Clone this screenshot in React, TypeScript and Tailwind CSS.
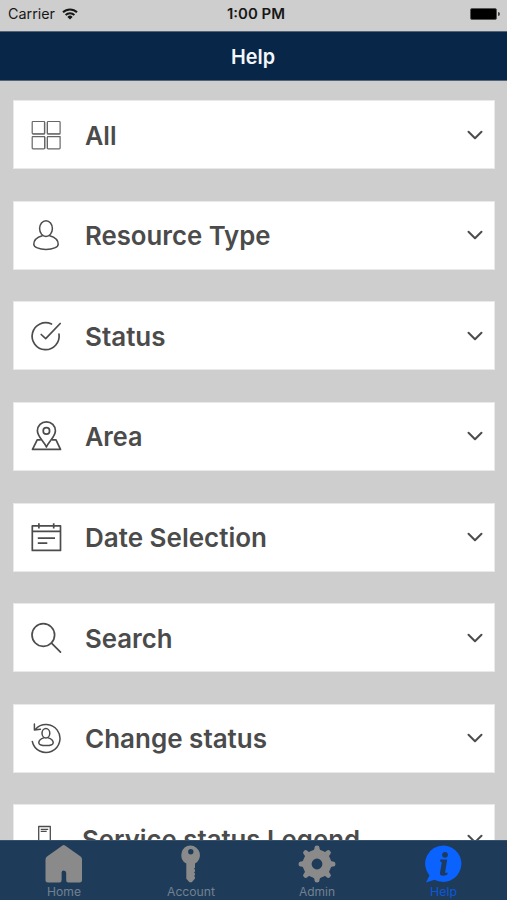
import type { ReactNode } from "react";

const line = {
  fill: "none",
  stroke: "#4c4c4c",
  strokeWidth: 1.7,
  strokeLinecap: "round" as const,
  strokeLinejoin: "round" as const,
};

function Icon({ children }: { children: ReactNode }) {
  return (
    <svg viewBox="0 0 32 32" className="h-8 w-8 shrink-0" {...line}>
      {children}
    </svg>
  );
}

const items: { label: string; width: number; inset?: boolean; icon: ReactNode }[] = [
  {
    label: "All",
    width: 31.5,
    icon: (
      <g strokeWidth={1.2} stroke="#666">
        <rect x="2.2" y="2.5" width="12.5" height="12.3" rx="0.8" />
        <rect x="17.4" y="2.5" width="12.7" height="12.3" rx="0.8" />
        <rect x="2.2" y="17.5" width="12.5" height="12.3" rx="0.8" />
        <rect x="17.4" y="17.5" width="12.7" height="12.3" rx="0.8" />
        <path d="M3 15h11.5V3.5M18 15h12M14.7 18v11.5M17.4 3.5V15M17.4 18v11.5M3 17.6h11.5M18 17.6h12" />
      </g>
    ),
  },
  {
    label: "Resource Type",
    width: 185.5,
    icon: (
      <g strokeWidth={1.5}>
        <ellipse cx="16" cy="9.6" rx="6.4" ry="7.8" />
        <path d="M12.3 16.8C7.500 18.200 3.800 21 3.800 25.200c0 3 5.300 5.200 12.200 5.200s12.200-2.200 12.200-5.200c0-4.200-3.700-7-8.500-8.400" />
      </g>
    ),
  },
  {
    label: "Status",
    width: 80.5,
    icon: <path d="M21.500 4A13.500 13.500 0 1 0 29 14.200M11.200 14.500l4.500 4.200L30.200 3.500" />,
  },
  {
    label: "Area",
    width: 57.5,
    icon: (
      <g>
        <path d="M16.400 27C14 21.500 7.400 16.800 7.400 10.800a9 9 0 0 1 18 0c0 6-6.600 10.700-9 16.200Z" />
        <circle cx="16.400" cy="10.900" r="3.200" />
        <path d="M10.200 19.800H7.200L2.500 29.400h28L26 19.800h-3.400" />
      </g>
    ),
  },
  {
    label: "Date Selection",
    width: 182,
    icon: (
      <path strokeLinecap="butt" d="M2.300 4.800h28.200v24.600H2.300ZM2.300 10.300h28.200M8.900 2.200v5.400M23.700 2.200v5.400M7.800 17.200h17.200M7.800 22.200h9.500" />
    ),
  },
  {
    label: "Search",
    width: 87.5,
    icon: (
      <g>
        <circle cx="13.300" cy="13" r="11.300" />
        <path d="M21.500 21.200l9 8.900" />
      </g>
    ),
  },
  {
    label: "Change status",
    width: 182,
    icon: (
      <g strokeWidth={1.5}>
        <path d="M5.500 7.200A14 14 0 1 1 2.300 19.500M4.400 2v5.900l6-.6" />
        <ellipse cx="15.900" cy="11.300" rx="3.900" ry="4.700" />
        <path d="M13.700 15.900c-2.700 1-4.900 2.400-4.900 4.800 0 1.900 3.100 2.900 7.200 2.900s7.200-1 7.200-2.900c0-2.400-2.200-3.800-4.900-4.800" />
      </g>
    ),
  },
  {
    label: "Service status Legend",
    width: 278,
    inset: true,
    icon: <path strokeWidth={1.3} strokeLinecap="butt" d="M8.700 3.500h11.600v26H8.700ZM10.700 6.300h7.500M10.700 8.300h6" />,
  },
];

const tabs: { label: string; width: number; icon: ReactNode }[] = [
  {
    label: "Home",
    width: 34,
    icon: <path d="M17.500.500Q18.800-.300 20 .500L35.600 11.500Q37 12.500 37 14.500V35Q37 37.500 34.500 37.500H23.300Q21.200 37.500 21.200 35.300V28Q21.200 25.500 18.800 25.500T16.600 28V35.300Q16.600 37.500 14.500 37.500H3Q.500 37.500.500 35V14.500Q.500 12.500 2 11.500Z" />,
  },
  {
    label: "Account",
    width: 48,
    icon: <path fillRule="evenodd" d="M18.500.600a9.600 9.600 0 0 1 4.500 18v4.200l-1 1 1 1v1.600l-1 1 1 1V30l-1 1 1 1v1.400l-3.200 3.800h-2.300l-3.200-3.400V18.600A9.600 9.600 0 0 1 18.500.600Zm.3 3.400a2.700 2.700 0 1 0 0 5.400 2.700 2.700 0 0 0 0-5.400Z" />,
  },
  {
    label: "Admin",
    width: 36,
    icon: (
      <g>
        <circle cx="19" cy="19" r="9.800" fill="none" stroke="currentColor" strokeWidth="8.800" />
        <g>
          {[0, 45, 90, 135, 180, 225, 270, 315].map((a) => (
            <path key={a} transform={`rotate(${a} 19 19)`} d="M13.500 6.500Q16.700 5.500 16.500 2.800 16.500.500 19 .500T21.500 2.800Q21.300 5.500 24.500 6.500Z" />
          ))}
        </g>
      </g>
    ),
  },
  {
    label: "Help",
    width: 27,
    icon: (
      <g>
        <path d="M19 .500a18.200 18.200 0 1 1-9.500 34.200L1 37.500 4.500 30.500A18.200 18.200 0 0 1 19 .500Z" />
        <g fill="#1c3b60">
          <circle cx="20" cy="9.800" r="2.900" />
          <path d="M15.200 14.500h7l-2 12.500q-.3 1.700 2.500.5l-.5 2.200q-3.200 1.500-5.500.9-2.200-.6-1.700-3.200l1.700-9.500q.200-1.200-1.500-1.400Z" />
        </g>
      </g>
    ),
  },
];

/** Text fitted to a fixed advance so that label widths stay stable. */
function Fit({ text, width, size, weight, y, height }: { text: string; width: number; size: number; weight: number; y: number; height: number }) {
  return (
    <svg width={width} height={height} className="block overflow-visible" fill="currentColor">
      <text x="0" y={y} textLength={width} fontSize={size} fontWeight={weight} lengthAdjust="spacingAndGlyphs">
        {text}
      </text>
    </svg>
  );
}

export default function App() {
  return (
    <div className="flex h-[900px] w-[507px] flex-col overflow-hidden bg-[#cecece] font-['Inter','Liberation_Sans',sans-serif]">
      <header className="shrink-0">
        <div className="grid h-[31px] grid-cols-3 items-center pt-[1px] pr-[7px] pb-[5px] pl-[8px] text-[#171717]">
          <div className="flex items-center gap-[7px]">
            <Fit text="Carrier" width={47} size={14} weight={400} y={15} height={19} />
            <svg width="16" height="12" viewBox="0 0 16 12" fill="none" stroke="#171717" strokeWidth="2">
              <path d="M1 4.300a10 10 0 0 1 14 0M3.600 7a6.300 6.300 0 0 1 8.800 0" />
              <path d="M8 11.500 5.400 8.900a3.700 3.700 0 0 1 5.200 0Z" fill="#171717" stroke="none" />
            </svg>
          </div>
          <div className="flex justify-center pl-[3px]">
            <Fit text="1:00 PM" width={58} size={14} weight={600} y={15} height={19} />
          </div>
          <div className="flex items-center justify-end">
            <span className="h-[12px] w-[27px] rounded-[2px] border border-[#555] bg-black" />
            <span className="ml-px h-[4px] w-[2px] rounded-r-full bg-[#444]" />
          </div>
        </div>
        <div className="flex h-[50px] items-center justify-center border-y border-[#536477] bg-[#072648] pr-[2px] text-[#f3f6fb]">
          <Fit text="Help" width={44} size={20.5} weight={600} y={20.7} height={26} />
        </div>
      </header>

      <main className="flex min-h-0 flex-1 flex-col gap-[31.640px] overflow-hidden pt-[19px] pr-[12px] pl-[13px]">
        {items.map((item) => (
          <button
            key={item.label}
            className="flex h-[69px] shrink-0 items-center border border-[#e9e9e9] bg-white pr-[11px] pl-[16px] text-left text-[#4b4b4b]"
          >
            <Icon>{item.icon}</Icon>
            <span className={item.inset ? "ml-[20px]" : "ml-[23px]"}>
              <Fit text={item.label} width={item.width} size={26} weight={600} y={26.7} height={34} />
            </span>
            <svg width="16" height="10" viewBox="0 0 16 10" className="ml-auto shrink-0" {...line} strokeWidth={2}>
              <path d="M1.500 1.700 8 8.200l6.500-6.500" />
            </svg>
          </button>
        ))}
      </main>

      <nav className="grid h-[60px] shrink-0 grid-cols-4 border-t border-[#34506b] bg-[#1e3c5a] pl-[1px]">
        {tabs.map((tab) => (
          <a
            key={tab.label}
            className={`flex flex-col items-center pt-[4px] ${tab.label === "Help" ? "text-[#0b63ff]" : "text-[#8a8a8a]"}`}
          >
            <svg width="38" height="38" viewBox="0 0 38 38" fill="currentColor">
              {tab.icon}
            </svg>
            <span className={tab.label === "Help" ? "text-[#0b57dc]" : "text-[#72818f]"}>
              <Fit text={tab.label} width={tab.width} size={11.5} weight={400} y={13} height={17} />
            </span>
          </a>
        ))}
      </nav>
    </div>
  );
}
